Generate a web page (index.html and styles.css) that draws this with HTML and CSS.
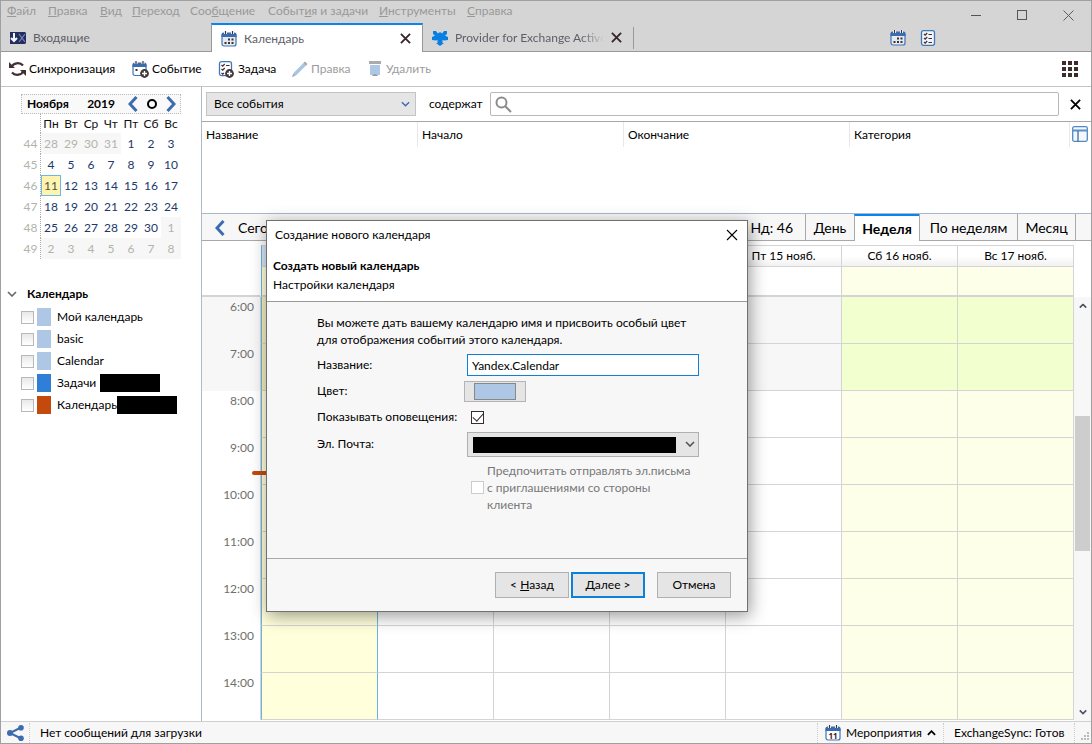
FILE: index.html
```html
<!DOCTYPE html>
<html lang="ru">
<head>
<meta charset="utf-8">
<title>Календарь</title>
<link rel="stylesheet" href="styles.css">
</head>
<body>
<svg class="defs" aria-hidden="true">
  <symbol id="i-cal" viewBox="0 0 16 16">
    <rect x="1" y="2.500" width="14" height="12.500" rx="2" fill="#e4eaf2" stroke="#3f74b5" stroke-width="1.200"/>
    <path d="M.500 6V3.500a2 2 0 0 1 2-2h11a2 2 0 0 1 2 2V6z" fill="#3b6cb0"/>
    <path d="M4.500 0v3M11.500 0v3" stroke="#fff" stroke-width="3"/>
    <path d="M4.500 0v3M11.500 0v3" stroke="#403030" stroke-width="1.200"/>
    <path d="M7 7.500h2v2H7zM10.500 7.500h2v2h-2zM3.500 11h2v2h-2zM7 11h2v2H7zM10.500 11h2v2h-2z" fill="#402e30"/>
  </symbol>
  <symbol id="i-task" viewBox="0 0 16 16">
    <rect x="1.500" y=".7" width="13" height="14.600" rx="2" fill="#f1f4f8" stroke="#4079b8" stroke-width="1.300"/>
    <path d="M4 4l1.200 1.200L7.200 3M4 8l1.200 1.200L7.200 7M4 12l1.200 1.200L7.200 11M8.500 4.500H12M8.500 8.500H12M8.500 12.500H12" fill="none" stroke="#402e30" stroke-width="1.200"/>
  </symbol>
  <symbol id="i-x" viewBox="0 0 12 12"><path d="M1 1l10 10M11 1L1 11" stroke="currentColor" stroke-width="2" fill="none"/></symbol>
  <symbol id="i-left" viewBox="0 0 10 16"><path d="M8.500 1L2 8l6.500 7" fill="none" stroke="#3d6bb0" stroke-width="3"/></symbol>
  <symbol id="i-right" viewBox="0 0 10 16"><path d="M1.500 1L8 8l-6.500 7" fill="none" stroke="#3d6bb0" stroke-width="3"/></symbol>
  <symbol id="i-down" viewBox="0 0 10 6"><path d="M1 1l4 4 4-4" fill="none" stroke="currentColor" stroke-width="1.600"/></symbol>
  <symbol id="i-up" viewBox="0 0 10 6"><path d="M1 5l4-4 4 4" fill="none" stroke="currentColor" stroke-width="2"/></symbol>
  <symbol id="i-add" viewBox="0 0 8 8"><circle cx="4" cy="4" r="3.900" fill="#44383a"/><path d="M4 1.800v4.400M1.800 4h4.400" stroke="#fff" stroke-width="1.200"/></symbol>
</svg>

<header class="titlebar">
  <nav class="menu">
    <a href="#"><u>Ф</u>айл</a><a href="#"><u>П</u>равка</a><a href="#"><u>В</u>ид</a><a href="#"><u>П</u>ереход</a><a href="#">Соо<u>б</u>щение</a><a href="#">Событ<u>и</u>я и задачи</a><a href="#"><u>И</u>нструменты</a><a href="#"><u>С</u>правка</a>
  </nav>
  <div class="tabs">
    <button class="tab inbox">
      <svg width="16" height="12" viewBox="0 0 16 12"><path d="M0 0h15l1 1v10l-1 1H0z" fill="#252d5c"/><path d="M9 2l3 4-3 4M15 2l-3 4 3 4" stroke="#7289bd" fill="none" stroke-width="1.200"/><path d="M4 1v7M1 6l3 3 3-3" stroke="#f4f7ff" stroke-width="2" fill="none"/></svg>
      Входящие
    </button>
    <div class="tab active">
      <svg width="16" height="16"><use href="#i-cal"/></svg>
      <span>Календарь</span>
      <button class="icon-btn" aria-label="Закрыть вкладку"><svg width="11" height="11"><use href="#i-x"/></svg></button>
    </div>
    <div class="tab provider">
      <svg width="16" height="16" viewBox="0 0 16 16" fill="#0a7fe2"><path d="M1 1h3l2 2.500L8 2l2 1.500L12 1h3v3l-2 1.500 3 1.500v3l-4 .5L10.500 10v3h1.500L8 16l-4-3h1.500v-3L4 10.500 0 10V7l3-1.500L1 4z"/></svg>
      <span class="fade">Provider for Exchange ActiveSync</span>
      <button class="icon-btn" aria-label="Закрыть вкладку"><svg width="11" height="11"><use href="#i-x"/></svg></button>
    </div>
    <div class="shortcuts">
      <button class="icon-btn" aria-label="Открыть календарь"><svg width="16" height="16"><use href="#i-cal"/></svg></button>
      <button class="icon-btn" aria-label="Открыть задачи"><svg width="16" height="16"><use href="#i-task"/></svg></button>
    </div>
  </div>
  <div class="window-buttons">
    <button class="icon-btn" aria-label="Свернуть"><svg width="11" height="11"><path d="M0 5.500h10" stroke="#555"/></svg></button>
    <button class="icon-btn" aria-label="Развернуть"><svg width="11" height="11"><rect x=".5" y=".5" width="9" height="9" fill="none" stroke="#555"/></svg></button>
    <button class="icon-btn" aria-label="Закрыть"><svg width="11" height="11"><path d="M.500.500l10 10M10.500.500l-10 10" stroke="#665564" fill="none"/></svg></button>
  </div>
</header>

<div class="toolbar">
  <button><svg width="17" height="16" viewBox="0 0 17 16"><path d="M2.500 6.500C4 1.500 11 1 14 4.500M14.500 9.500C13 14.500 6 15 3 11.500" fill="none" stroke="#403032" stroke-width="2.200"/><path d="M0 1v6h6zM17 15V9h-6z" fill="#403032"/></svg>Синхронизация</button>
  <button><svg width="17" height="17" viewBox="0 0 17 17"><rect x="1" y="2.500" width="13" height="12" rx="2" fill="#fff" stroke="#3f74b5" stroke-width="1.200"/><path d="M.500 6V3.500a2 2 0 0 1 2-2h10a2 2 0 0 1 2 2V6z" fill="#3b6cb0"/><path d="M4 0v3M11 0v3" stroke="#fff" stroke-width="3"/><path d="M4 0v3M11 0v3" stroke="#403030" stroke-width="1.200"/><path d="M3.500 8h2v2h-2z" fill="#402e30"/><use href="#i-add" x="8" y="8" width="9" height="9"/></svg>Событие</button>
  <button><svg width="17" height="17" viewBox="0 0 17 17"><rect x="1.500" y=".7" width="12" height="14" rx="2" fill="#fff" stroke="#4079b8" stroke-width="1.300"/><path d="M3.500 4l1.200 1.200L6.700 3M3.500 8l1.200 1.200L6.700 7M3.500 12l1.200 1.200 1.300-1.200M8 4.500h3.500" fill="none" stroke="#402e30" stroke-width="1.200"/><use href="#i-add" x="7" y="8" width="9" height="9"/></svg>Задача</button>
  <button disabled><svg width="17" height="17" viewBox="0 0 17 17"><path d="M1 16l2-4.500L13.500 1 16 3.500 5.500 14z" fill="#a9c5e2"/><path d="M1 16l1.500-3.500L4.500 14.500zM12.500 2L14 .5 16.500 3 15 4.500z" fill="#aaa"/></svg>Правка</button>
  <button disabled class="trash"><svg width="12" height="16" viewBox="0 0 12 16"><path d="M0 0h12v3H0z" fill="#aaa"/><path d="M1 4h10v10H1z" fill="#adc7e5"/><path d="M3 15c1-2.500 5-2.500 6 0z" fill="#999"/></svg>Удалить</button>
  <button class="apps" aria-label="Меню"><svg width="16" height="16" viewBox="0 0 16 16" fill="#402b2c"><path d="M0 0h4v4H0zM6 0h4v4H6zM12 0h4v4h-4zM0 6h4v4H0zM6 6h4v4H6zM12 6h4v4h-4zM0 12h4v4H0zM6 12h4v4H6zM12 12h4v4h-4z"/></svg></button>
</div>

<div class="workspace">
  <aside class="sidebar">
    <section class="mini">
      <div class="mini-head">
        <b>Ноября</b><b class="year">2019</b>
        <button class="icon-btn" aria-label="Предыдущий месяц"><svg width="10" height="16"><use href="#i-left"/></svg></button>
        <button class="icon-btn" aria-label="Сегодня"><svg width="10" height="10"><circle cx="5" cy="5" r="4" fill="none" stroke="#000" stroke-width="2"/></svg></button>
        <button class="icon-btn" aria-label="Следующий месяц"><svg width="10" height="16"><use href="#i-right"/></svg></button>
      </div>
      <table class="mini-grid">
        <tr class="dow"><th></th><td>Пн</td><td>Вт</td><td>Ср</td><td>Чт</td><td>Пт</td><td>Сб</td><td>Вс</td></tr>
        <tr><th>44</th><td class="out">28</td><td class="out">29</td><td class="out">30</td><td class="out">31</td><td>1</td><td>2</td><td>3</td></tr>
        <tr><th>45</th><td>4</td><td>5</td><td>6</td><td>7</td><td>8</td><td>9</td><td>10</td></tr>
        <tr><th>46</th><td class="now">11</td><td>12</td><td>13</td><td>14</td><td>15</td><td>16</td><td>17</td></tr>
        <tr><th>47</th><td>18</td><td>19</td><td>20</td><td>21</td><td>22</td><td>23</td><td>24</td></tr>
        <tr><th>48</th><td>25</td><td>26</td><td>27</td><td>28</td><td>29</td><td>30</td><td class="out">1</td></tr>
        <tr><th>49</th><td class="out">2</td><td class="out">3</td><td class="out">4</td><td class="out">5</td><td class="out">6</td><td class="out">7</td><td class="out">8</td></tr>
      </table>
    </section>
    <section class="calendars">
      <h2><svg width="10" height="6"><use href="#i-down"/></svg>Календарь</h2>
      <label><input type="checkbox" class="check"><i class="swatch"></i>Мой календарь</label>
      <label><input type="checkbox" class="check"><i class="swatch"></i>basic</label>
      <label><input type="checkbox" class="check"><i class="swatch"></i>Calendar</label>
      <label><input type="checkbox" class="check"><i class="swatch blue"></i>Задачи<i class="redacted"></i></label>
      <label><input type="checkbox" class="check"><i class="swatch rust"></i>Календарь<i class="redacted"></i></label>
    </section>
  </aside>

  <main class="content">
    <div class="filter">
      <div class="select-wrap">
        <select aria-label="События"><option>Все события</option></select>
        <svg width="9" height="6"><use href="#i-down"/></svg>
      </div>
      <label for="search">содержат</label>
      <div class="search-wrap">
        <svg width="17" height="17" viewBox="0 0 17 17"><circle cx="6.500" cy="6.500" r="5" fill="none" stroke="#8c8c8c" stroke-width="2"/><path d="M10 10l6 6" stroke="#8c8c8c" stroke-width="2"/></svg>
        <input id="search" type="text">
      </div>
      <button class="icon-btn" aria-label="Закрыть поиск"><svg width="11" height="11"><use href="#i-x"/></svg></button>
    </div>

    <div class="list">
      <table class="list-head">
        <tr><th class="c1">Название</th><th class="c2">Начало</th><th class="c3">Окончание</th><th>Категория</th>
        <th class="c5"><button class="icon-btn" aria-label="Столбцы"><svg width="16" height="16" viewBox="0 0 16 16"><rect x=".7" y=".7" width="14.600" height="14.600" rx="1.500" fill="#f4f8fc" stroke="#5588c0" stroke-width="1.300"/><path d="M0 4.500h16" stroke="#5a90cc" stroke-width="2"/><path d="M6 5v10.500" stroke="#426aa0" stroke-width="1.300"/></svg></button></th></tr>
      </table>
    </div>

    <div class="viewbar">
      <button class="icon-btn" aria-label="Назад"><svg width="10" height="16"><use href="#i-left"/></svg></button>
      <button class="today-btn">Сегодня</button>
      <button class="icon-btn" aria-label="Вперёд"><svg width="10" height="18" viewBox="0 0 10 16"><use href="#i-right"/></svg></button>
      <span class="weekno">Нд: 46</span>
      <button class="v1">День</button><button class="v2 on">Неделя</button><button class="v3">По неделям</button><button class="v4">Месяц</button>
      <span class="rest"></span>
    </div>

    <div class="week-head">
      <table class="week">
        <tr class="names"><th></th><td class="today"></td><td></td><td></td><td></td><td>Пт 15 нояб.</td><td>Сб 16 нояб.</td><td>Вс 17 нояб.</td></tr>
        <tr class="allday"><th></th><td class="today"></td><td></td><td></td><td></td><td></td><td class="we"></td><td class="we"></td></tr>
      </table>
    </div>
    <div class="week-body">
      <table class="week hours">
        <tr class="off"><th>6:00</th><td class="today"></td><td></td><td></td><td></td><td></td><td class="we"></td><td class="we"></td></tr>
        <tr class="off"><th>7:00</th><td class="today"></td><td></td><td></td><td></td><td></td><td class="we"></td><td class="we"></td></tr>
        <tr><th>8:00</th><td class="today"></td><td></td><td></td><td></td><td></td><td class="we"></td><td class="we"></td></tr>
        <tr><th>9:00<i class="now-mark"></i></th><td class="today"></td><td></td><td></td><td></td><td></td><td class="we"></td><td class="we"></td></tr>
        <tr><th>10:00</th><td class="today"></td><td></td><td></td><td></td><td></td><td class="we"></td><td class="we"></td></tr>
        <tr><th>11:00</th><td class="today"></td><td></td><td></td><td></td><td></td><td class="we"></td><td class="we"></td></tr>
        <tr><th>12:00</th><td class="today"></td><td></td><td></td><td></td><td></td><td class="we"></td><td class="we"></td></tr>
        <tr><th>13:00</th><td class="today"></td><td></td><td></td><td></td><td></td><td class="we"></td><td class="we"></td></tr>
        <tr><th>14:00</th><td class="today"></td><td></td><td></td><td></td><td></td><td class="we"></td><td class="we"></td></tr>
      </table>
      <div class="scrollbar">
        <svg width="8" height="6" viewBox="0 0 10 6"><use href="#i-up"/></svg>
        <div class="track"><div class="thumb"></div></div>
        <svg width="8" height="6" viewBox="0 0 10 6"><path d="M1 1l4 4 4-4" fill="none" stroke="currentColor" stroke-width="2"/></svg>
      </div>
    </div>
  </main>
</div>

<footer class="status">
  <span class="share"><svg width="17" height="16" viewBox="0 0 17 16"><path d="M14 2.500L3 8l11 5.500" stroke="#3d6bb0" stroke-width="2" fill="none"/><g fill="#3d6bb0"><circle cx="3" cy="8" r="3"/><circle cx="14" cy="2.800" r="2.800"/><circle cx="14" cy="13.200" r="2.800"/></g></svg></span>
  <span class="msg">Нет сообщений для загрузки</span>
  <button class="agenda"><svg width="16" height="16" viewBox="0 0 16 16"><rect x="1" y="2.500" width="14" height="12.500" rx="2" fill="#fff" stroke="#3f74b5" stroke-width="1.200"/><path d="M.500 6V3.500a2 2 0 0 1 2-2h11a2 2 0 0 1 2 2V6z" fill="#3b6cb0"/><path d="M4.500 0v3M11.500 0v3" stroke="#fff" stroke-width="3"/><path d="M4.500 0v3M11.500 0v3" stroke="#403030" stroke-width="1.200"/><text x="8" y="13.500" text-anchor="middle" class="day11">11</text></svg>Мероприятия<svg width="9" height="6"><use href="#i-up"/></svg></button>
  <span class="sync">ExchangeSync: Готов</span>
  <span class="grip"><svg width="10" height="10" fill="#bbb"><path d="M7 0h2v2H7zM7 3h2v2H7zM7 6h2v2H7zM4 3h2v2H4zM4 6h2v2H4zM1 6h2v2H1z"/></svg></span>
</footer>

<div class="dialog" role="dialog" aria-labelledby="dlg-title">
  <div class="dlg-head">
    <div class="dlg-title"><span id="dlg-title">Создание нового календаря</span>
      <button class="icon-btn" aria-label="Закрыть окно"><svg width="12" height="12"><path d="M1 1l10 10M11 1L1 11" stroke="#000" stroke-width="1.100" fill="none"/></svg></button></div>
    <h1>Создать новый календарь</h1>
    <p>Настройки календаря</p>
  </div>
  <div class="dlg-body">
    <p>Вы можете дать вашему календарю имя и присвоить особый цвет<br>для отображения событий этого календаря.</p>
    <div class="form">
      <label for="f-name">Название:</label>
      <input id="f-name" type="text" value="Yandex.Calendar">
      <label for="f-color">Цвет:</label>
      <button id="f-color" class="color" aria-label="Цвет"><i></i></button>
      <label for="f-alert">Показывать оповещения:</label>
      <input id="f-alert" type="checkbox" class="check dark" checked>
      <label for="f-mail">Эл. Почта:</label>
      <div class="select-wrap mail"><select id="f-mail"><option></option></select><i class="redacted"></i><svg width="10" height="6"><use href="#i-down"/></svg></div>
    </div>
    <label class="prefer"><input type="checkbox" class="check" disabled><span>Предпочитать отправлять эл.письма<br>с приглашениями со стороны<br>клиента</span></label>
  </div>
  <div class="dlg-foot">
    <button>&lt; <u>Н</u>азад</button><button class="primary"><u>Д</u>алее &gt;</button><button class="cancel">Отмена</button>
  </div>
</div>
</body>
</html>
```

FILE: styles.css
```css
* { box-sizing: border-box; }
body {
  margin: 0;
  height: 100vh;
  display: flex;
  flex-direction: column;
  border: 1px solid #a0a0a0;
  background: #fff;
  color: #000;
  font: 12px/16px Lato, "Open Sans", sans-serif;
  overflow: hidden;
}
button, input, select { font: inherit; color: inherit; margin: 0; }
button { border: 0; background: none; padding: 0; }
svg { display: block; flex: none; }
p, h1, h2 { margin: 0; font-size: 12px; }
a { color: inherit; text-decoration: none; }
.defs { position: absolute; width: 0; height: 0; }
.icon-btn { display: flex; align-items: center; justify-content: center; flex: none; }

/* title bar */
.titlebar { position: relative; flex: none; background: #d5d5d5; }
.menu {
  display: grid;
  grid-template-columns: 41px 52px 32px 58px 78px 111px 88px auto;
  justify-content: start;
  height: 22px;
  padding: 2px 0 0 6px;
  color: #999;
  white-space: nowrap;
}
.tabs { display: flex; height: 29px; box-shadow: inset 0 -1px #999; color: #5e5e68; }
.tab { display: flex; align-items: center; gap: 7px; white-space: nowrap; }
.tab span { flex: 1; }
.inbox { width: 210px; padding-left: 9px; }
.active {
  width: 212px;
  padding: 0 11px 0 9px;
  background: #fff;
  border: 1px solid #999;
  border-width: 0 1px;
  border-top: 2px solid #0a84f0;
}
.provider { width: 211px; padding: 0 11px 0 9px; border-right: 1px solid transparent; border-image: linear-gradient(transparent 5px, #999 5px 25px, transparent 25px) 1; }
.tab .icon-btn { color: #38242e; }
.fade {
  overflow: hidden;
  -webkit-mask-image: linear-gradient(90deg, #000 85%, transparent);
  mask-image: linear-gradient(90deg, #000 85%, transparent);
}
.shortcuts { display: flex; gap: 14px; margin: 0 155px 0 auto; }
.window-buttons { position: absolute; top: 9px; right: 17px; display: flex; gap: 35px; }

/* toolbar */
.toolbar { display: grid; grid-template-columns: 123px 86px 73px 76px 1fr auto; align-items: center; flex: none; height: 35px; padding: 0 13px 0 8px; border-bottom: 1px solid #c4c4c4; }
.toolbar button { display: flex; align-items: center; gap: 3px; }
.toolbar button:disabled { color: #9c9c9c; }
.toolbar .trash { gap: 5px; padding-left: 2px; }

.workspace { display: flex; flex: 1; min-height: 0; }

/* sidebar */
.sidebar { flex: none; width: 201px; padding: 7px 0 0 20px; border-right: 1px solid #b0bac6; }
.mini { width: 160px; color: #22376a; }
.mini-head { display: flex; align-items: center; gap: 9px; height: 20px; padding: 0 4px 0 5px; border: 1px dotted #bbb; background: #f9f9f9; color: #000; }
.mini-head .year { margin: 0 4px 0 auto; }
.mini-grid { width: 160px; table-layout: fixed; border-collapse: separate; border-spacing: 0; }
.mini-grid th, .mini-grid td { height: 21px; padding: 0; text-align: center; line-height: 19px; }
.mini-grid th { width: 20px; font-weight: 400; color: #b0b5ab; border-right: 1px dotted #aaa; }
.mini-grid .dow { color: #111; }
.mini-grid .dow th, .mini-grid .dow td { height: 19px; line-height: 18px; }
.mini-grid .out { background: #f7f7f7; color: #b0b5ab; }
.mini-grid .now { background: #fdf5ae; border: 1px solid #6db5ec; color: #5a4a4a; }
.calendars { margin: 25px 0 0 -15px; }
.calendars h2 { display: flex; align-items: center; gap: 10px; height: 20px; margin-bottom: 2px; }
.calendars h2 svg { color: #666; margin-left: 1px; }
.calendars label { display: flex; align-items: center; width: 139px; height: 22px; margin-left: 15px; }
.calendars label:last-child { width: 156px; }
.calendars .redacted { width: 60px; margin-left: auto; }
.swatch { width: 14px; height: 18px; margin: 0 6px 0 3px; background: #adc7e5; }
.blue { background: #2f7fd6; }
.rust { background: #c4490c; }
.redacted { display: block; height: 18px; background: #000; }
.check { appearance: none; flex: none; width: 13px; height: 13px; border: 1px solid #b8b8b8; background: linear-gradient(#e8e8e8, #fff); }
.check.dark { border-color: #382c30; background: #fff; }
.check.dark:checked::after { content: ""; display: block; width: 9px; height: 5px; margin: 1px; border: solid #382c30; border-width: 0 0 1px 1px; transform: rotate(-48deg); }

/* filter */
.content { display: flex; flex-direction: column; flex: 1; min-width: 0; }
.filter { display: flex; align-items: center; flex: none; height: 35px; padding: 0 10px 0 4px; border-bottom: 1px solid #a8a8a8; }
.select-wrap { position: relative; width: 210px; height: 24px; }
.select-wrap select { appearance: none; width: 100%; height: 100%; padding: 0 7px; border: 1px solid #c4c4c4; border-radius: 0; background: #e5e5e5; }
.select-wrap svg { position: absolute; right: 6px; top: 9px; color: #3d6bb0; }
.filter label { width: 74px; padding-left: 13px; }
.search-wrap { display: flex; align-items: center; flex: 1; height: 24px; margin-right: 11px; padding-left: 4px; border: 1px solid #b8b8b8; border-radius: 2px; }
.search-wrap input { flex: 1; min-width: 0; border: 0; outline: 0; }

/* event list */
.list { flex: none; height: 92px; border-bottom: 1px solid #a9b9ca; }
.list-head { width: 100%; table-layout: fixed; border-spacing: 0; }
.list-head th { height: 25px; padding: 0 4px; font-weight: 400; text-align: left; border-right: 1px solid #e8e8e8; }
.list-head .c1 { width: 216px; }
.list-head .c2 { width: 206px; }
.list-head .c3 { width: 226px; }
.list-head .c5 { width: 21px; padding: 0 0 2px 2px; border: 0; }

/* view switcher */
.viewbar { display: flex; align-items: stretch; flex: none; height: 27px; background: #f7f7f7; box-shadow: inset 0 -1px #a8a8a8; font-size: 14px; }
.viewbar .icon-btn { width: 36px; }
.viewbar > .today-btn { width: 48px; text-align: left; border: 0; }
.weekno { margin-left: auto; padding: 4px 12px 0 0; line-height: 20px; }
.viewbar button:not(.icon-btn) { white-space: nowrap; }
.viewbar .v1, .viewbar .v2, .viewbar .v3, .viewbar .v4, .rest { border-left: 1px solid #a8a8a8; }
.viewbar .v1 { width: 49px; }
.viewbar .v2 { width: 65px; }
.viewbar .v3 { width: 98px; }
.viewbar .v4 { width: 58px; }
.viewbar .on { background: #fff; border-top: 2px solid #0a84f0; font-weight: 700; }
.rest { width: 16px; }

/* week grid */
.week-head { flex: none; padding: 4px 17px 0 0; }
.week-body { display: flex; flex: 1; align-items: flex-start; min-height: 0; overflow: hidden; }
.week { flex: 1; width: 100%; table-layout: fixed; border-spacing: 0; }
.week th { width: 59px; padding: 0 6px 0 0; font-weight: 400; text-align: right; vertical-align: top; line-height: 19px; color: #70706a; border-right: 1px solid #d4d4d4; }
.week td { padding: 0; border: 1px solid #d4d4d4; border-width: 0 1px 1px 0; text-align: center; }
.names td { height: 22px; border-top-width: 1px; background: linear-gradient(#fff 50%, #f1f1f1); }
.names th, .allday th { border-right-color: transparent; }
.allday td { height: 30px; border-bottom-width: 2px; }
.allday th { border-bottom: 2px solid #d4d4d4; }
.hours tr { height: 47px; }
.week .today { width: 117px; background: #ffffdc; border-left: 1px solid #6eb2e4; border-right-color: #6eb2e4; }
.names .today { background: #d6e6f5; }
.week .we { background: #feffe9; }
.week .off th, .week .off td { background: #f7f7f7; }
.week .off .we { background: #f2ffcf; }
.week .off .today { background: #f0f0c0; }
.hours th { position: relative; }
.now-mark { position: absolute; top: 33px; right: -8px; width: 16px; height: 4px; border-radius: 2px; background: #c4490c; }
.scrollbar { display: flex; flex-direction: column; align-items: center; align-self: stretch; width: 17px; padding: 6px 0; background: #f7f7f7; color: #4d5260; }
.track { flex: 1; width: 15px; }
.thumb { height: 135px; margin-top: 107px; background: #cdcdcd; }

/* status bar */
.status { display: flex; align-items: center; flex: none; height: 22px; border-top: 1px solid #d0d0d0; background: #f7f7f7; }
.status > * { display: flex; align-items: center; height: 20px; }
.share { width: 29px; padding-left: 6px; border-right: 1px dotted #ccc; }
.msg { flex: 1; padding-left: 10px; }
.agenda { width: 126px; padding-left: 7px; gap: 5px; border-left: 1px dotted #ccc; }
.sync { width: 132px; padding-left: 10px; border: 1px dotted #ccc; border-width: 0 1px; white-space: nowrap; }
.grip { width: 16px; padding: 8px 0 0 5px; }
.day11 { font: 700 8px "Open Sans", sans-serif; fill: #402020; }

/* dialog */
.dialog {
  position: absolute;
  top: 220px;
  left: 266px;
  width: 482px;
  border: 1px solid #707070;
  background: #f7f7f7;
  box-shadow: 2px 4px 16px rgba(0, 0, 0, .4);
}
.dlg-head { height: 81px; padding: 0 9px 0 6px; background: #fff; border-bottom: 1px solid #999; }
.dlg-title { display: flex; align-items: center; justify-content: space-between; height: 28px; margin-bottom: 8px; padding-left: 2px; }
.dlg-head h1 { line-height: 18px; margin-bottom: 2px; }
.dlg-body { height: 257px; padding: 12px 48px 0 50px; border-bottom: 1px solid #a8a8a8; }
.dlg-body > p { line-height: 17px; white-space: nowrap; }
.form { display: grid; grid-template-columns: 150px 232px; grid-template-rows: 24px 28px 24px 30px; align-items: center; padding-top: 5px; }
.form > label { white-space: nowrap; }
.form input[type="text"] { height: 22px; padding: 0 4px; border: 1px solid #0f80d8; background: #fff; outline: 0; }
.color { display: flex; justify-content: center; align-items: center; width: 62px; height: 21px; margin-left: -3px; border: 1px solid #b4b4b4; background: #e5e5e5; }
.color i { width: 42px; height: 17px; border: 1px solid #888; background: #adc7e5; }
.form .check { margin-left: 4px; }
.mail { width: 232px; height: 25px; }
.mail select { border-color: #b0b0b0; }
.mail .redacted { position: absolute; left: 6px; top: 5px; width: 203px; height: 16px; }
.mail svg { right: 4px; color: #555; }
.prefer { display: flex; align-items: center; gap: 3px; margin: 3px 0 0 154px; color: #777; line-height: 17px; white-space: nowrap; }
.prefer .check { border-color: #ccc; background: #fff; }
.dlg-foot { display: flex; justify-content: flex-end; height: 52px; padding: 13px 16px 0 0; }
.dlg-foot button { width: 74px; height: 26px; margin-right: 2px; border: 1px solid #b0b0b0; background: #e5e5e5; }
.dlg-foot .primary { border: 2px solid #0f80d8; }
.dlg-foot .cancel { margin: 0 0 0 10px; }
```
